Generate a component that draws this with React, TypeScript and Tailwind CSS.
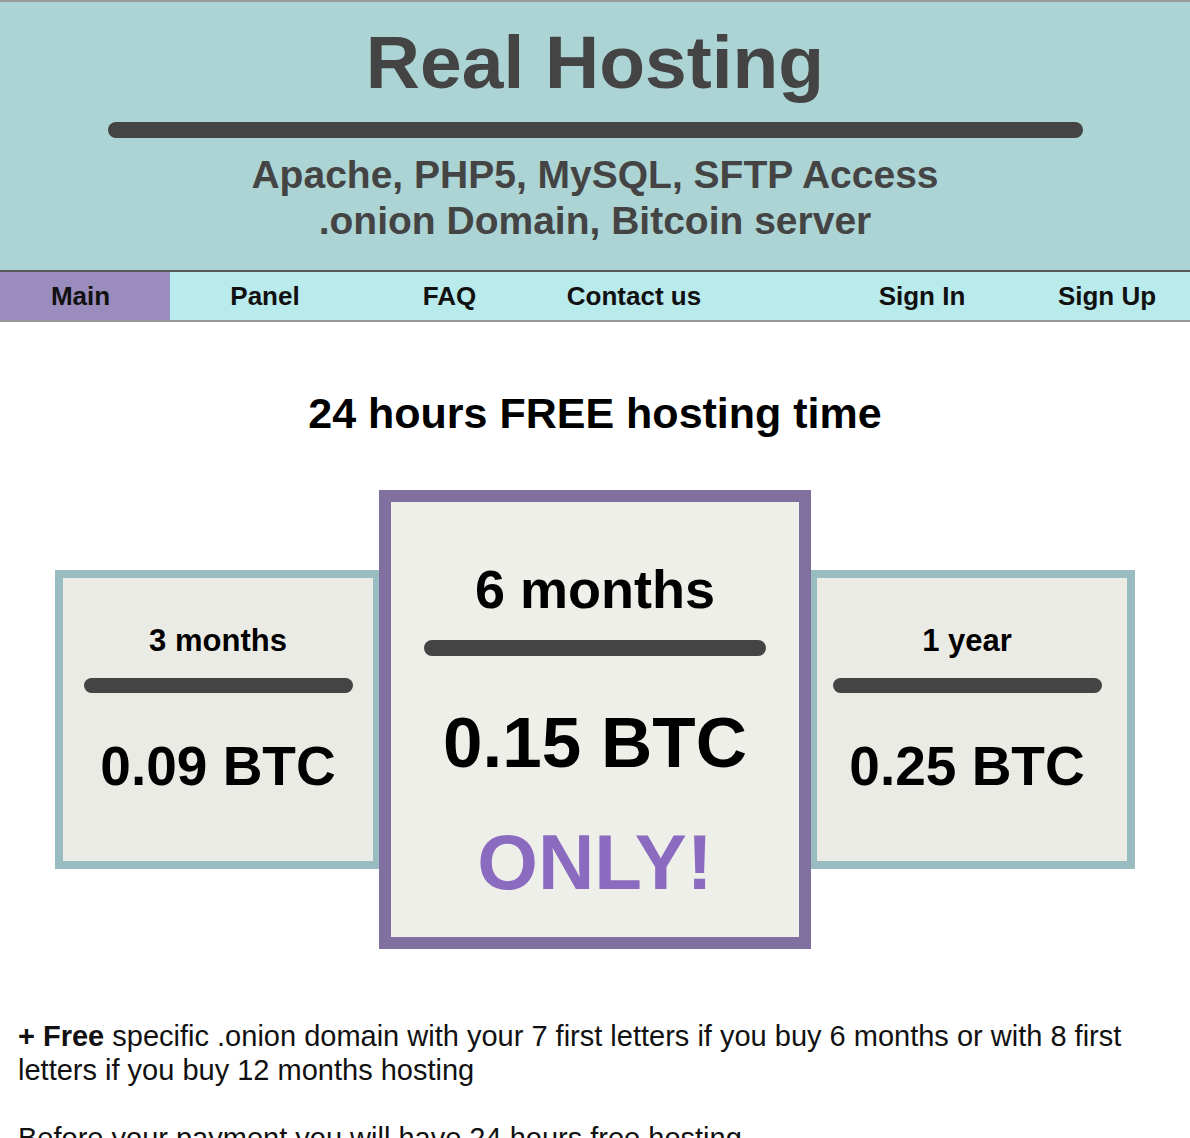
import React from "react";

const navLeft = ["Main", "Panel", "FAQ", "Contact us"];
const navRight = ["Sign In", "Sign Up"];

const SideCard: React.FC<{ term: string; price: string; shift?: boolean }> = ({ term, price, shift }) => (
  <div
    className={`w-[326px] h-[299px] border-[8px] border-[#99bcc0] bg-[#ebebe5] flex flex-col items-center ${
      shift ? "pr-[10px]" : ""
    }`}
  >
    <p className="mt-[45px] text-[31px] leading-[36px] font-bold text-black">{term}</p>
    <div className="mt-[19px] w-[269px] h-[15px] rounded-full bg-[#444]"></div>
    <p className="mt-[43px] text-[55px] leading-[60px] font-bold text-black">{price}</p>
  </div>
);

export default function App() {
  return (
    <div className="min-h-screen bg-white font-['Liberation_Sans',Arial,sans-serif]">
      <header className="border-t-2 border-[#9a9a9a] bg-[#add4d5] border-b-2 border-b-[#5a5a5a] pt-[22px] pb-[26px] flex flex-col items-center text-[#444]">
        <h1 className="text-[75px] leading-[76px] font-bold">Real Hosting</h1>
        <div className="mt-[22px] w-[975px] h-[16px] rounded-full bg-[#444]"></div>
        <p className="mt-[14px] text-[39px] leading-[46px] font-bold text-center">
          Apache, PHP5, MySQL, SFTP Access
          <br />
          .onion Domain, Bitcoin server
        </p>
      </header>

      <nav className="h-[50px] bg-[#b9eaec] border-b-2 border-[#9a9a9a] flex justify-between text-[26px] leading-[48px] font-bold text-[#111]">
        <ul className="flex">
          {navLeft.map((item, i) => (
            <li
              key={item}
              className={`w-[170px] mr-[14.5px] pr-[9px] text-center ${i === 0 ? "bg-[#9a8cbc]" : ""}`}
            >
              {item}
            </li>
          ))}
        </ul>
        <ul className="flex">
          {navRight.map((item) => (
            <li key={item} className="w-[185px] pl-[19px] text-center">
              {item}
            </li>
          ))}
        </ul>
      </nav>

      <main className="px-[18px]">
        <h2 className="mt-[66px] text-center text-[43px] leading-[50px] font-bold text-black">
          24 hours FREE hosting time
        </h2>

        <div className="mt-[52px] flex items-center justify-center">
          <SideCard term="3 months" price="0.09 BTC" />
          <div className="relative z-10 -mx-[2px] w-[432px] h-[459px] border-[12px] border-[#7f70a0] bg-[#efefe9] flex flex-col items-center">
            <p className="mt-[57px] text-[54px] leading-[60px] font-bold text-black">6 months</p>
            <div className="mt-[21px] w-[342px] h-[16px] rounded-full bg-[#444]"></div>
            <p className="mt-[49px] text-[71px] leading-[76px] font-bold text-black">0.15 BTC</p>
            <p className="mt-[39px] text-[78px] leading-[84px] font-bold text-[#8a6bc0]">ONLY!</p>
          </div>
          <SideCard term="1 year" price="0.25 BTC" shift />
        </div>

        <div className="mt-[70px] text-[29px] leading-[34px] text-[#111]">
          <p>
            <b>+ Free</b> specific .onion domain with your 7 first letters if you buy 6 months or with 8 first
            letters if you buy 12 months hosting
          </p>
          <p className="mt-[34px]">Before your payment you will have 24 hours free hosting</p>
        </div>
      </main>
    </div>
  );
}
